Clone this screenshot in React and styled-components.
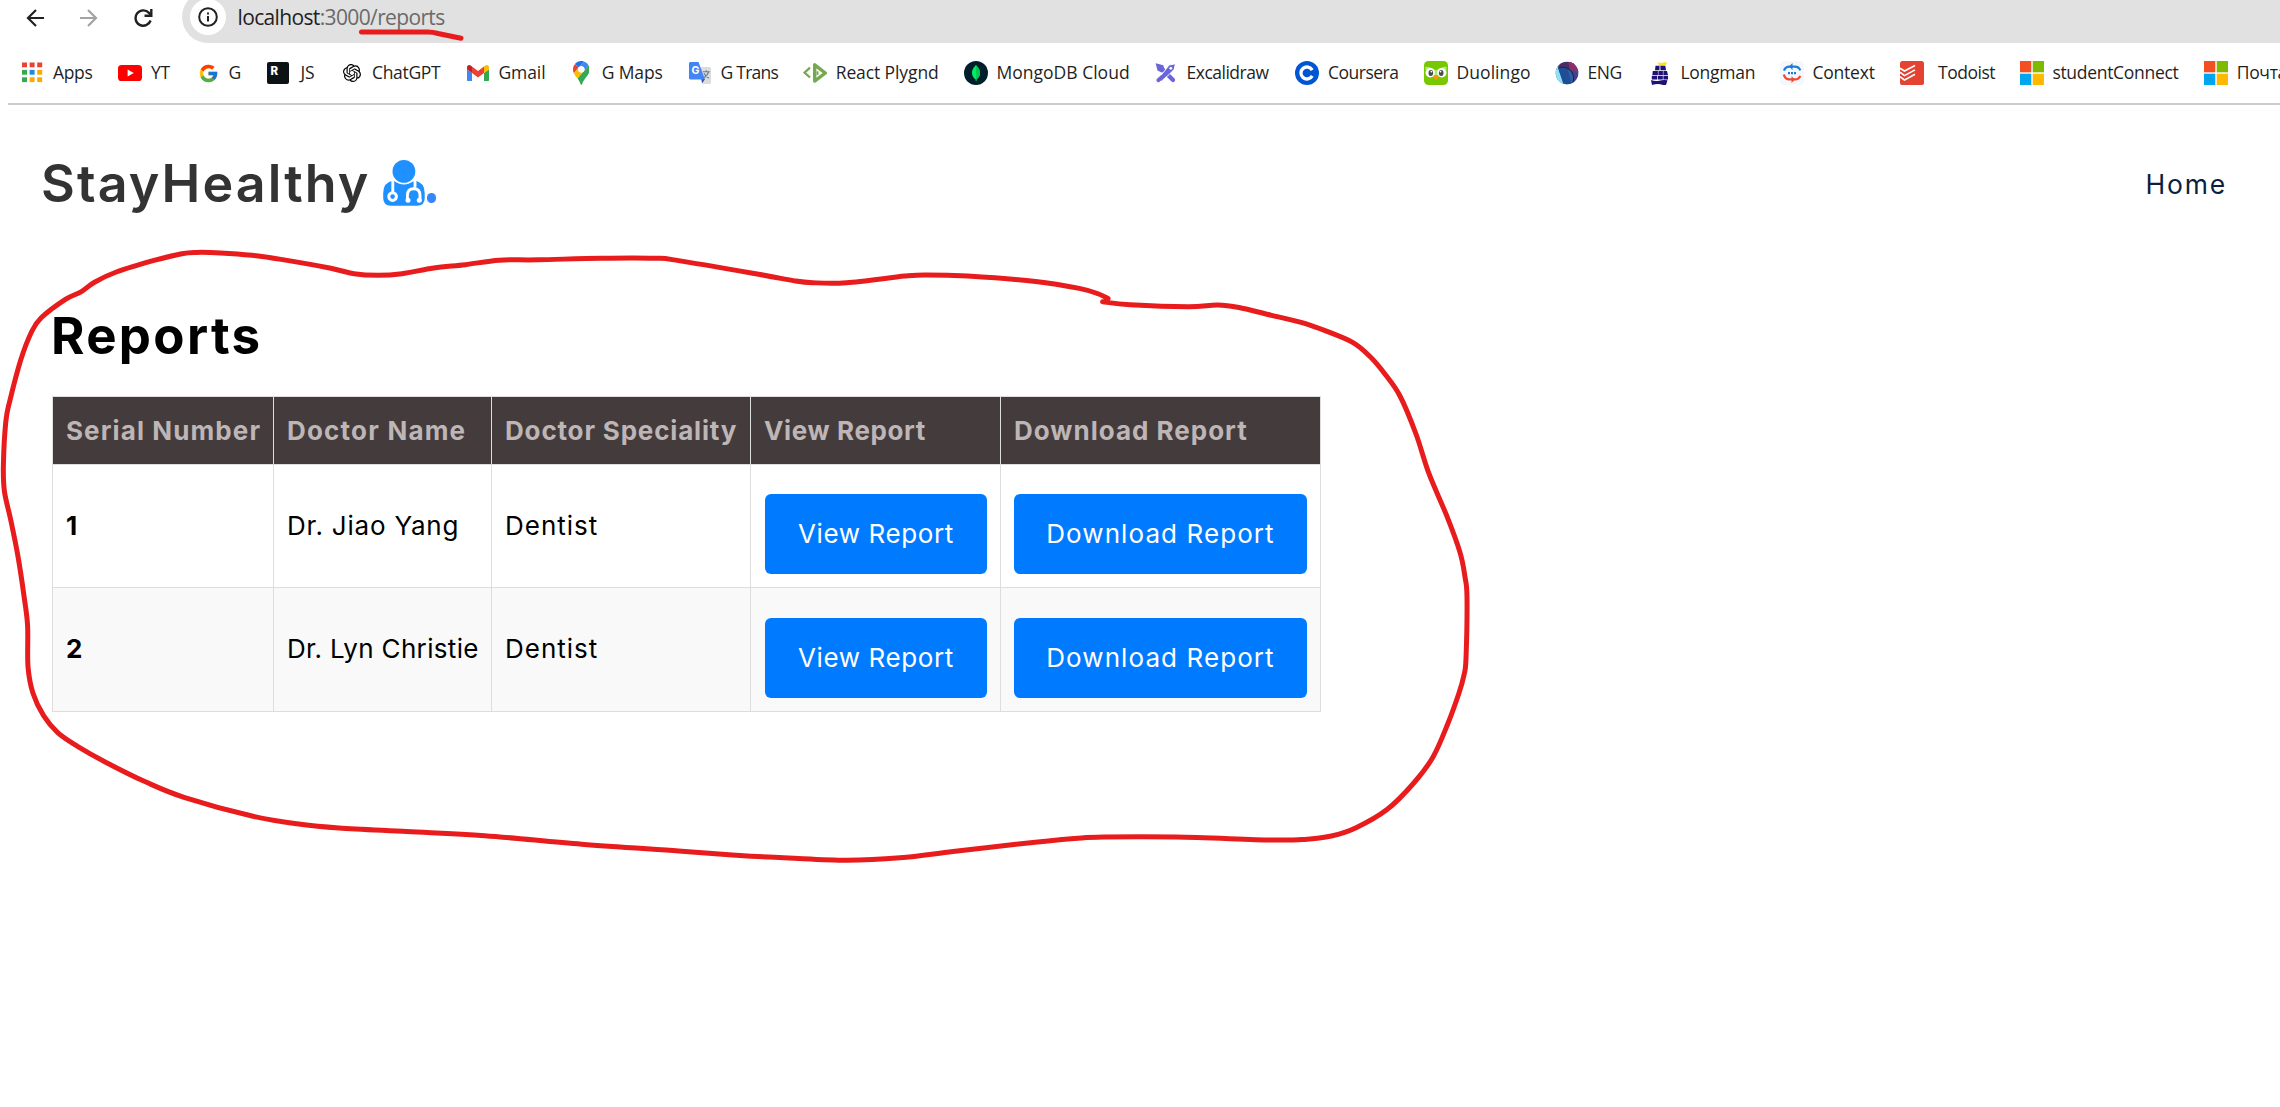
import React from 'react';
import styled, { createGlobalStyle } from 'styled-components';
import { FcGoogle } from 'react-icons/fc';
import { SiOpenai } from 'react-icons/si';

const GlobalStyle = createGlobalStyle`
  * { box-sizing: border-box; }
  body { margin: 0; background: #fff; color: #000; font-family: Inter, sans-serif; overflow: hidden; }
`;

const Page = styled.div`
  position: relative;
  width: 2280px;
  height: 1107px;
  overflow: hidden;
  display: flex;
  flex-direction: column;
`;

/* ---------- browser chrome ---------- */
const Toolbar = styled.div`
  display: flex;
  flex: none;
  height: 43px;
  overflow: hidden;
  padding-left: 26px;
`;
const NavButtons = styled.div`
  display: flex;
  align-items: center;
  gap: 36px;
  width: 156px;
  height: 35px;
  svg { flex: none; display: block; }
`;
const AddressBar = styled.div`
  flex: 1;
  display: flex;
  align-items: center;
  height: 52px;
  margin-top: -9px;
  padding-left: 7.5px;
  border-radius: 26px 0 0 26px;
  background: #e1e1e1;
`;
const SiteInfo = styled.span`
  display: flex;
  align-items: center;
  justify-content: center;
  width: 36px;
  height: 36px;
  border-radius: 50%;
  background: #fff;
`;
const Url = styled.span`
  margin-left: 12px;
  font: 400 21px/28px "Open Sans", sans-serif;
  letter-spacing: -0.64px;
  color: #6a6a6a;
  white-space: nowrap;
`;
const UrlHost = styled.span`
  color: #1f1f1f;
`;
const BookmarksBar = styled.nav`
  display: flex;
  flex: none;
  align-items: center;
  height: 60px;
  padding-left: 20px;
  overflow: hidden;
`;
const Divider = styled.div`
  flex: none;
  height: 2px;
  margin-left: 8px;
  background: #cbcbcb;
`;
const BookmarkItem = styled.a`
  display: flex;
  flex: none;
  align-items: center;
  width: ${(p) => p.$width}px;
`;
const IconSlot = styled.span`
  display: flex;
  flex: none;
  align-items: center;
  justify-content: center;
  width: 24px;
  height: 24px;
  svg { display: block; flex: none; }
`;
const BookmarkLabel = styled.span`
  margin-left: ${(p) => p.$gap}px;
  padding-bottom: 1.5px;
  font: 400 17.5px/24px "Open Sans", sans-serif;
  letter-spacing: ${(p) => p.$spacing}px;
  color: #1f1f1f;
  white-space: nowrap;
`;

/* ---------- site ---------- */
const Header = styled.header`
  display: flex;
  flex: none;
  align-items: center;
  justify-content: space-between;
  height: 158px;
  padding: 0 53px 0 41px;
`;
const Logo = styled.div`
  display: flex;
  align-items: center;
`;
const LogoName = styled.span`
  width: 341.7px;
  font-size: 52px;
  font-weight: 600;
  line-height: 60px;
  letter-spacing: 2.1px;
  color: #333;
  white-space: nowrap;
`;
const LogoDot = styled.span`
  width: 9.4px;
  height: 9.4px;
  margin: 28px 0 0 2px;
  border-radius: 50%;
  background: #3685fb;
`;
const HomeLink = styled.a`
  font-size: 26.5px;
  line-height: 32px;
  letter-spacing: 1.8px;
  color: #0c1f40;
`;
const Main = styled.main`
  padding: 43px 0 0 51px;
`;
const Title = styled.h1`
  margin: 0 0 30px;
  font-size: 51px;
  line-height: 60px;
  font-weight: 700;
  letter-spacing: 2.3px;
`;
const Table = styled.table`
  table-layout: fixed;
  width: 1269px;
  margin-left: 1px;
  border-collapse: separate;
  border-spacing: 0;
  border-top: 1px solid #ddd;
  border-left: 1px solid #ddd;
  font-size: 26px;
  line-height: 36px;
  text-align: left;
`;
const Col = styled.col`
  width: ${(p) => p.$width}px;
`;
const Row = styled.tr`
  height: ${(p) => p.$height}px;
  background: ${(p) => (p.$striped ? '#f9f9f9' : '#fff')};
`;
const HeadCell = styled.th`
  padding: 0 0 0 13px;
  border-right: 1px solid #ddd;
  border-bottom: 1px solid #ddd;
  background: #443c3c;
  color: #beb6b6;
  font-weight: 700;
  letter-spacing: ${(p) => p.$spacing}px;
  white-space: nowrap;
`;
const Cell = styled.td`
  padding: 0 0 1px 13px;
  border-right: 1px solid #ddd;
  border-bottom: 1px solid #ddd;
  font-weight: ${(p) => (p.$bold ? 700 : 400)};
  letter-spacing: ${(p) => p.$spacing || 0}px;
  white-space: nowrap;
`;
const ActionCell = styled(Cell)`
  padding: 0 13px 13px ${(p) => p.$inset}px;
  vertical-align: bottom;
`;
const Button = styled.button`
  display: block;
  width: 100%;
  height: 80px;
  padding: 0;
  border: 0;
  border-radius: 6px;
  background: #007bff;
  color: #fff;
  font: 400 26px/36px Inter, sans-serif;
  letter-spacing: ${(p) => p.$spacing}px;
`;
const Annotation = styled.svg`
  position: absolute;
  inset: 0;
  pointer-events: none;
`;
const DoctorSvg = styled.svg`
  display: block;
  flex: none;
  margin-top: -2px;
`;

const DoctorIcon = () => (
  <DoctorSvg width="42" height="46" viewBox="0 0 42 46">
    <circle cx="20.900" cy="11.400" r="11.400" fill="#1e90ff" />
    <path d="M10.500 20.600Q20.900 28.600 31.300 20.600 41.700 22.500 41.700 33V38Q41.700 45.800 34 45.800H8Q.2 45.800.2 38V33Q.2 22.500 10.500 20.600Z" fill="#1e90ff" />
    <g fill="none" stroke="#fff" strokeWidth="2.900">
      <path d="M9.800 19V33" />
      <circle cx="9.600" cy="36.600" r="3.800" strokeWidth="3" />
      <path d="M31.300 19.500Q32.500 22 31.800 28.500" />
      <path d="M24.400 41V35.500Q24.400 28.800 30.700 28.800T37 35.500V41" />
    </g>
    <circle cx="25" cy="40.300" r="2.500" fill="#fff" />
    <circle cx="36.300" cy="40.300" r="2.500" fill="#fff" />
  </DoctorSvg>
);

/* ---------- bookmark icons ---------- */
const AppsIcon = () => (
  <svg width="24" height="24">
    {['#ea4335', '#ea4335', '#ea4335', '#34a853', '#1e88e5', '#fbab00', '#34a853', '#fbab00', '#fbab00'].map((c, i) => (
      <rect key={i} x={2 + (i % 3) * 7.6} y={1.5 + Math.floor(i / 3) * 7.4} width="5" height="4.8" fill={c} />
    ))}
  </svg>
);
const YoutubeIcon = () => (
  <svg width="24" height="16">
    <rect width="24" height="16" rx="3.6" fill="#f00" />
    <path d="M9.6 4.4 15.8 8 9.6 11.6z" fill="#fff" />
  </svg>
);
const ReplIcon = () => (
  <svg width="22" height="22">
    <rect width="22" height="22" rx="2" fill="#0b1315" />
    <text x="3.6" y="13.2" fontFamily="Inter, sans-serif" fontWeight="800" fontSize="11.5" fill="#fff">R</text>
  </svg>
);
const GmailIcon = () => (
  <svg width="22" height="16.5" viewBox="52 42 88 66">
    <path fill="#4285f4" d="M58 108h14V74L52 59v43c0 3.32 2.69 6 6 6" />
    <path fill="#34a853" d="M120 108h14c3.32 0 6-2.69 6-6V59l-20 15" />
    <path fill="#fbbc04" d="M120 48v26l20-15v-8c0-7.42-8.47-11.65-14.4-7.2" />
    <path fill="#ea4335" d="M72 74V48l24 18 24-18v26L96 92" />
    <path fill="#c5221f" d="M52 51v8l20 15V48l-5.6-4.2c-5.94-4.45-14.4-.22-14.4 7.2" />
  </svg>
);
const MapsIcon = () => (
  <svg width="16.6" height="23.8" viewBox="0 0 92.3 132.3">
    <path fill="#1a73e8" d="M60.2 2.2C55.8.8 51 0 46.1 0 32 0 19.3 6.4 10.8 16.5l21.8 18.3L60.2 2.2z" />
    <path fill="#ea4335" d="M10.8 16.5C4.1 24.5 0 34.9 0 46.1c0 8.7 1.7 15.7 4.6 22l28-33.3-21.8-18.3z" />
    <path fill="#4285f4" d="M46.2 28.5c9.8 0 17.7 7.9 17.7 17.7 0 4.3-1.6 8.3-4.2 11.4 0 0 13.9-16.6 27.5-32.7-5.6-10.8-15.3-19-27-22.7L32.6 34.8c3.3-3.8 8.1-6.3 13.6-6.3" />
    <path fill="#fbbc04" d="M46.2 63.8c-9.8 0-17.7-7.9-17.7-17.7 0-4.3 1.5-8.3 4.1-11.3l-28 33.3c4.8 10.6 12.8 19.2 21 29.9l34.1-40.5c-3.3 3.9-8.1 6.3-13.5 6.3" />
    <path fill="#34a853" d="M59.1 109.2c15.4-24.1 33.3-35 33.3-63 0-7.7-1.9-14.9-5.2-21.3L25.6 98c2.6 3.4 5.3 7.3 7.9 11.3 9.4 14.5 6.8 23.1 12.8 23.1s3.4-8.7 12.8-23.2" />
    <circle cx="46.2" cy="46.2" r="17.7" fill="#fff" />
  </svg>
);
const TranslateIcon = () => (
  <svg width="24" height="24">
    <path d="M11 6h10.5A1.5 1.5 0 0 1 23 7.500V21.500A1.500 1.500 0 0 1 21.500 23H15z" fill="#dcdcdc" />
    <path d="M13.300 18H17l-3 4.600z" fill="#3949ab" />
    <path d="M2 1h8.500L17 18.500H2.500A1.500 1.500 0 0 1 1 17V2z" fill="#4285f4" />
    <path d="M14.800 10.700h7M18.300 9.200v1.500M20.600 10.700q-1 4-5 6.200M16 12.200q1.600 3.600 5 4.900" stroke="#607d8b" strokeWidth="1.100" fill="none" />
    <text x="3.400" y="13" fontFamily="Inter, sans-serif" fontWeight="700" fontSize="10.500" fill="#fff">G</text>
  </svg>
);
const PlaygroundIcon = () => (
  <svg width="24" height="20" fill="none" stroke="#76a94f" strokeLinejoin="round">
    <path d="M7 4.700 1.500 9.600 7 14.500" strokeWidth="2.300" strokeLinejoin="miter" />
    <path d="M11.700 1.900V18.100L22.300 10z" strokeWidth="3.400" />
    <path d="M14.500 8.300v3.600" strokeWidth="2" />
  </svg>
);
const MongoIcon = () => (
  <svg width="24" height="24">
    <circle cx="12" cy="12" r="12" fill="#001e2b" />
    <path d="M12 3.700c1 1.700 4 3.800 4 8.300 0 3-1.600 5-3.500 6.300L12.200 20.300h-.4l-.3-2C9.600 17 8 15 8 12c0-4.500 3-6.600 4-8.300z" fill="#00ed64" />
    <path d="M12.100 5v15.300h.3l.3-2.100c1.800-1.400 3.300-3.300 3.300-6.200 0-3.800-2.600-5.500-3.900-7z" fill="#00c853" />
  </svg>
);
const ExcalidrawIcon = () => (
  <svg width="22" height="22" stroke="#6965db" strokeLinecap="round" fill="#6965db">
    <path d="M5.500 5.500 18 18" strokeWidth="4.200" />
    <path d="M1.500 2 7.800 3.800 9 8 6.500 9.800 3 8z" strokeWidth="1.200" />
    <path d="M20.200 1.800 14 3 9.500 9 3.300 16.500 6.300 19.200 14.500 12.200 19 7.500z" stroke="#fff" strokeWidth="1" />
    <path d="M3.300 18.200 7 15" strokeWidth="3.800" />
    <circle cx="15.800" cy="6.300" r="1.400" fill="#fff" stroke="none" />
  </svg>
);
const CourseraIcon = () => (
  <svg width="24" height="24">
    <circle cx="12" cy="12" r="12" fill="#0056d2" />
    <path d="M17.200 9.100a6 6 0 1 0 0 5.800" fill="none" stroke="#fff" strokeWidth="3.300" />
  </svg>
);
const DuolingoIcon = () => (
  <svg width="24" height="24">
    <rect width="24" height="24" rx="4.500" fill="#78c800" />
    <path d="M1 6q3.500-1.500 11 3.200Q19.500 4.500 23 6l-2 9-9 1-9-1z" fill="#a5ed6e" />
    <circle cx="6.200" cy="11.700" r="4.700" fill="#fff" />
    <circle cx="17.800" cy="11.700" r="4.700" fill="#fff" />
    <ellipse cx="6.800" cy="11.900" rx="2.300" ry="3" fill="#4b4b4b" />
    <ellipse cx="17.200" cy="11.900" rx="2.300" ry="3" fill="#4b4b4b" />
    <circle cx="7.300" cy="10.600" r=".9" fill="#fff" />
    <circle cx="16.500" cy="10.600" r=".9" fill="#fff" />
    <path d="M9.300 14.800q2.700-1.600 5.400 0-.5 3.700-2.700 3.700t-2.700-3.700z" fill="#ff9600" />
  </svg>
);
const EngIcon = () => (
  <svg width="24" height="24">
    <defs><clipPath id="globe"><circle cx="12" cy="12" r="11.300" /></clipPath></defs>
    <g clipPath="url(#globe)">
      <rect width="24" height="24" fill="#2d5fa5" />
      <path d="M0 4h4L4 10l7 14H0z" fill="#8ee0f5" />
      <path d="M3 7l9-2 5 20H9z" fill="#1e4f96" />
      <path d="M2 6Q8-2 20 2l-3 9q-7-6-15-5z" fill="#4d2c66" />
      <path d="M13 0q10 1 12 13-4-4-10-4z" fill="#8f2d6b" />
      <path d="M15 8q7 2 9 6l-5 8q-1-8-4-14z" fill="#4a3f86" />
      <path d="M3 7q8-3 14 4 3 5 1 11" stroke="#16234f" fill="none" />
    </g>
  </svg>
);
const LongmanIcon = () => (
  <svg width="18" height="24">
    <path d="M6.500 1q3.500 1.500 5.500.5t4 .5L14.500 4.200q-3.500 1-6.500.3z" fill="#ffdf2e" />
    <g fill="#1f1276">
      <path d="M4.500 4.800h4V9.300H4zM9.300 4.800h5l.8 4.500H9.500zM1.800 10h5.100v4.300H1.300zM7.500 10h4.400v4.300H7.300zM12.500 10H16l1 4.300h-4.700zM.8 15h5.500v3.400H.8zM7 15h4.800v3.400H7zM12.400 15H17v3.400h-4.600z" />
      <path d="M0 19q4 1.600 8 .7t8.500-.4L15 24h-3q-4-1.600-8-.8L1 24z" />
    </g>
  </svg>
);
const ContextIcon = () => (
  <svg width="24" height="24" fill="none">
    <rect width="24" height="24" rx="4" fill="#f4f8fd" />
    <path d="M4 9.600Q5.500 5.700 9.500 5.700h5.500q3.800 0 5.200 3.600" stroke="#1c7cd6" strokeWidth="2.300" />
    <path d="M12.500 2v7L9 5.500z" fill="#1c7cd6" />
    <path d="M3.900 13.500q1 4.900 5.600 4.900h5.500q3.800 0 5.200-3.600" stroke="#f5472f" strokeWidth="2.300" />
    <path d="M11.500 15.200v6.800l3.600-3.400z" fill="#f5472f" />
    <path d="M8 12.100h2M11 12.100h2M14 12.100h2" stroke="#1c7cd6" strokeWidth="2.100" />
  </svg>
);
const TodoistIcon = () => (
  <svg width="24" height="24">
    <rect width="24" height="24" rx="2.600" fill="#e44332" />
    <path d="M0 7.200 4.500 10 15 4.500M0 11.200 4.500 14.600 15 8.900M0 15.700 4.500 19 15 13.300" fill="none" stroke="#fff" strokeWidth="1.600" />
  </svg>
);
const MicrosoftIcon = () => (
  <svg width="24" height="24">
    <rect width="11.300" height="11.300" fill="#f25022" />
    <rect x="12.700" width="11.300" height="11.300" fill="#7fba00" />
    <rect y="12.700" width="11.300" height="11.300" fill="#00a4ef" />
    <rect x="12.700" y="12.700" width="11.300" height="11.300" fill="#ffb900" />
  </svg>
);

const bookmarks = [
  { label: 'Apps', icon: <AppsIcon />, width: 98, gap: 9, spacing: -0.33 },
  { label: 'YT', icon: <YoutubeIcon />, width: 78, gap: 9, spacing: -0.4 },
  { label: 'G', icon: <FcGoogle size={21} />, width: 70, gap: 8.5, spacing: 0 },
  { label: 'JS', icon: <ReplIcon />, width: 74, gap: 10.5, spacing: -0.2 },
  { label: 'ChatGPT', icon: <SiOpenai size={18} />, width: 126, gap: 8, spacing: -0.33 },
  { label: 'Gmail', icon: <GmailIcon />, width: 103, gap: 8.5, spacing: -0.1 },
  { label: 'G Maps', icon: <MapsIcon />, width: 119, gap: 8.7, spacing: -0.12 },
  { label: 'G Trans', icon: <TranslateIcon />, width: 115, gap: 8.5, spacing: -0.75 },
  { label: 'React Plygnd', icon: <PlaygroundIcon />, width: 161, gap: 8.7, spacing: -0.1 },
  { label: 'MongoDB Cloud', icon: <MongoIcon />, width: 190, gap: 8.4, spacing: 0.02 },
  { label: 'Excalidraw', icon: <ExcalidrawIcon />, width: 141, gap: 8.5, spacing: -0.5 },
  { label: 'Coursera', icon: <CourseraIcon />, width: 129, gap: 9, spacing: -0.5 },
  { label: 'Duolingo', icon: <DuolingoIcon />, width: 131, gap: 8.5, spacing: 0.06 },
  { label: 'ENG', icon: <EngIcon />, width: 93, gap: 8.4, spacing: -0.35 },
  { label: 'Longman', icon: <LongmanIcon />, width: 132, gap: 8.4, spacing: -0.25 },
  { label: 'Context', icon: <ContextIcon />, width: 120, gap: 8.4, spacing: -0.2 },
  { label: 'Todoist', icon: <TodoistIcon />, width: 120, gap: 14, spacing: -0.48 },
  { label: 'studentConnect', icon: <MicrosoftIcon />, width: 184, gap: 8.4, spacing: -0.3 },
  { label: 'Почта', icon: <MicrosoftIcon />, width: 100, gap: 8.7, spacing: -0.3 },
];

const columns = [
  { title: 'Serial Number', width: 221, spacing: 1.1 },
  { title: 'Doctor Name', width: 218, spacing: 1.2 },
  { title: 'Doctor Speciality', width: 259, spacing: 0.83 },
  { title: 'View Report', width: 250, spacing: 0.63 },
  { title: 'Download Report', width: 320, spacing: 1 },
];

const reports = [
  { id: 1, doctor: 'Dr. Jiao Yang', speciality: 'Dentist', spacing: 0.78, height: 123 },
  { id: 2, doctor: 'Dr. Lyn Christie', speciality: 'Dentist', spacing: 0.33, height: 124 },
];

/* Marker stroke drawn over the page, as a list of points along the line. */
const loopPoints = [
  [1102.6, 301.8], [1130, 304.7], [1188, 306.7], [1217.5, 305], [1239, 307.5], [1268, 314.5], [1302, 322.6], [1326.5, 331.2],
  [1353, 342.6], [1370, 356.5], [1384.7, 373.7], [1400, 396], [1416, 434], [1429, 473.7], [1446.7, 515.7], [1460, 552.4],
  [1465, 577], [1467, 597], [1466, 658.6], [1464, 675], [1459, 693], [1447.7, 724], [1433, 757], [1413.8, 783], [1387, 809.6],
  [1355.6, 828], [1331.4, 836], [1304.7, 839.4], [1270.8, 840], [1176, 837], [1103.5, 837], [1074.5, 838.6], [1016, 844.3],
  [953, 851.6], [900, 857.8], [846.6, 860.2], [788.5, 858], [740, 855.5], [678.6, 851], [581.7, 844.3], [484.7, 835.7],
  [407, 831.6], [339, 828], [300.5, 824.3], [252, 816], [184, 797.3], [145.4, 781.8], [106.6, 762.7], [77.5, 746.3],
  [58, 732.9], [43.6, 715.7], [33, 693.3], [28, 666.7], [27.6, 626], [24.2, 597.3], [18, 556.5], [10.7, 519.8], [4.4, 491.2],
  [3.4, 464.7], [5.8, 421.8], [9.7, 401.4], [20.8, 359.8], [31.5, 332], [41.2, 317.8], [65.4, 299.4], [81.4, 291.6],
  [94.5, 282.2], [116.3, 272], [155, 260.2], [181.8, 253.7], [196.3, 252.4], [220.6, 252.9], [252, 255.3], [281, 259.4],
  [329.6, 268], [353.9, 273.7], [378, 275.3], [402, 273.7], [433.8, 268], [465.3, 264.7], [499.3, 260.2], [538, 259.8],
  [601, 258.2], [654.4, 258.2], [678.6, 260.6], [760, 274.5], [793.3, 280.6], [812.7, 282.7], [846.6, 282.7], [904.8, 276.1],
  [926.6, 274.9], [967.8, 276.1], [1035.7, 281.4], [1079.3, 288.4], [1098.7, 294], [1108, 298.6],
];

function smoothPath(points) {
  let d = `M${points[0]}`;
  for (let i = 0; i < points.length - 1; i += 1) {
    const a = points[Math.max(i - 1, 0)];
    const b = points[i];
    const c = points[i + 1];
    const e = points[Math.min(i + 2, points.length - 1)];
    d += `C${b[0] + (c[0] - a[0]) / 6},${b[1] + (c[1] - a[1]) / 6} ${c[0] - (e[0] - b[0]) / 6},${c[1] - (e[1] - b[1]) / 6} ${c}`;
  }
  return d;
}

export default function App() {
  return (
    <Page>
      <GlobalStyle />
      <Toolbar>
        <NavButtons>
          <svg width="18" height="18" fill="none" stroke="#202124" strokeWidth="2.200">
            <path d="M18 9H2M10 1 2 9l8 8" />
          </svg>
          <svg width="18" height="18" fill="none" stroke="#a3a3a3" strokeWidth="2.200">
            <path d="M0 9h16M8 1l8 8-8 8" />
          </svg>
          <svg width="19" height="18" fill="none" stroke="#202124" strokeWidth="2.400">
            <path d="M16.600 11.500A7.700 7.700 0 1 1 15 3.900L17 6" />
            <path d="M17.300 0v6.800H10.500" />
          </svg>
        </NavButtons>
        <AddressBar>
          <SiteInfo>
            <svg width="20" height="20" fill="none" stroke="#202124" strokeWidth="2">
              <circle cx="10" cy="10" r="8.800" />
              <path d="M10 9v5.500M10 5.400v2.100" />
            </svg>
          </SiteInfo>
          <Url><UrlHost>localhost</UrlHost>:3000/reports</Url>
        </AddressBar>
      </Toolbar>
      <BookmarksBar>
        {bookmarks.map((b) => (
          <BookmarkItem key={b.label} $width={b.width}>
            <IconSlot>{b.icon}</IconSlot>
            <BookmarkLabel $gap={b.gap} $spacing={b.spacing}>{b.label}</BookmarkLabel>
          </BookmarkItem>
        ))}
      </BookmarksBar>
      <Divider />
      <Header>
        <Logo>
          <LogoName>StayHealthy</LogoName>
          <DoctorIcon />
          <LogoDot />
        </Logo>
        <HomeLink>Home</HomeLink>
      </Header>
      <Main>
        <Title>Reports</Title>
        <Table>
          <colgroup>
            {columns.map((c) => <Col key={c.title} $width={c.width} />)}
          </colgroup>
          <thead>
            <Row $height={68}>
              {columns.map((c) => <HeadCell key={c.title} $spacing={c.spacing}>{c.title}</HeadCell>)}
            </Row>
          </thead>
          <tbody>
            {reports.map((r, i) => (
              <Row key={r.id} $height={r.height} $striped={i % 2 === 1}>
                <Cell $bold>{r.id}</Cell>
                <Cell $spacing={r.spacing}>{r.doctor}</Cell>
                <Cell $spacing={1}>{r.speciality}</Cell>
                <ActionCell $inset={14}><Button $spacing={0.61}>View Report</Button></ActionCell>
                <ActionCell $inset={13}><Button $spacing={1.08}>Download Report</Button></ActionCell>
              </Row>
            ))}
          </tbody>
        </Table>
      </Main>
      <Annotation width="2280" height="1107" fill="none" stroke="#e81c1c" strokeWidth="5" strokeLinecap="round" strokeLinejoin="round">
        <path d={smoothPath(loopPoints)} />
        <path d="M361.500 32H428q5 0 10 1.500L461 38.300" />
      </Annotation>
    </Page>
  );
}
